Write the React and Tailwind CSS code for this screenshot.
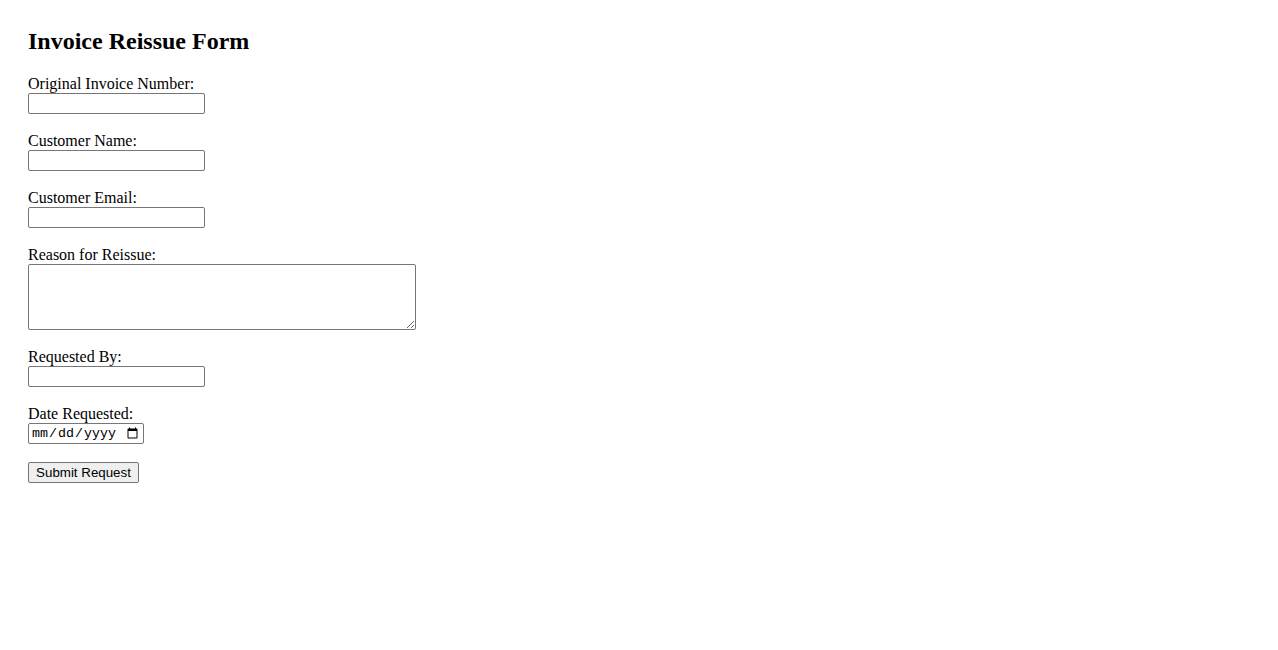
import { useState } from "react";

const textFields = [
  { id: "invoice", label: "Original Invoice Number:" },
  { id: "name", label: "Customer Name:" },
  { id: "email", label: "Customer Email:", type: "email" },
];

const inputCls =
  "block w-[177px] h-[21px] border border-[#767676] rounded-[2px] bg-white px-[2px] text-[13.33px] font-['Liberation_Sans',Arial,sans-serif] outline-none";

export default function App() {
  const [form, setForm] = useState({});

  function update(id, value) {
    setForm((prev) => ({ ...prev, [id]: value }));
  }

  return (
    <main className="min-h-screen bg-white px-[28px] pt-[28px] text-black font-['Liberation_Serif','Times_New_Roman',serif]">
      <h1 className="text-[24px] font-bold leading-[27px] mb-[20px]">Invoice Reissue Form</h1>

      <form onSubmit={(e) => e.preventDefault()}>
        {textFields.map((f) => (
          <div key={f.id} className="mb-[18px]">
            <label htmlFor={f.id} className="block text-[16px] leading-[18px]">
              {f.label}
            </label>
            <input
              id={f.id}
              type={f.type || "text"}
              value={form[f.id] || ""}
              onChange={(e) => update(f.id, e.target.value)}
              className={inputCls}
            />
          </div>
        ))}

        <div className="mb-[18px]">
          <label htmlFor="reason" className="block text-[16px] leading-[18px]">
            Reason for Reissue:
          </label>
          <textarea
            id="reason"
            value={form.reason || ""}
            onChange={(e) => update("reason", e.target.value)}
            className="block w-[388px] h-[66px] border border-[#767676] rounded-[2px] bg-white p-[2px] text-[13.33px] font-['Liberation_Mono',monospace] outline-none resize"
          />
        </div>

        <div className="mb-[18px]">
          <label htmlFor="requested" className="block text-[16px] leading-[18px]">
            Requested By:
          </label>
          <input
            id="requested"
            type="text"
            value={form.requested || ""}
            onChange={(e) => update("requested", e.target.value)}
            className={inputCls}
          />
        </div>

        <div className="mb-[18px]">
          <label htmlFor="date" className="block text-[16px] leading-[18px]">
            Date Requested:
          </label>
          <input
            id="date"
            type="date"
            value={form.date || ""}
            onChange={(e) => update("date", e.target.value)}
            className="block w-[116px] h-[21px] border border-[#767676] rounded-[2px] bg-white px-[2px] text-[13.33px] font-['Liberation_Mono',monospace] outline-none"
          />
        </div>

        <button
          type="submit"
          className="block w-[111px] h-[21px] border border-[#767676] rounded-[2px] bg-[#efefef] px-[6px] text-[13.33px] leading-[15px] font-['Liberation_Sans',Arial,sans-serif] text-black"
        >
          Submit Request
        </button>
      </form>
    </main>
  );
}
